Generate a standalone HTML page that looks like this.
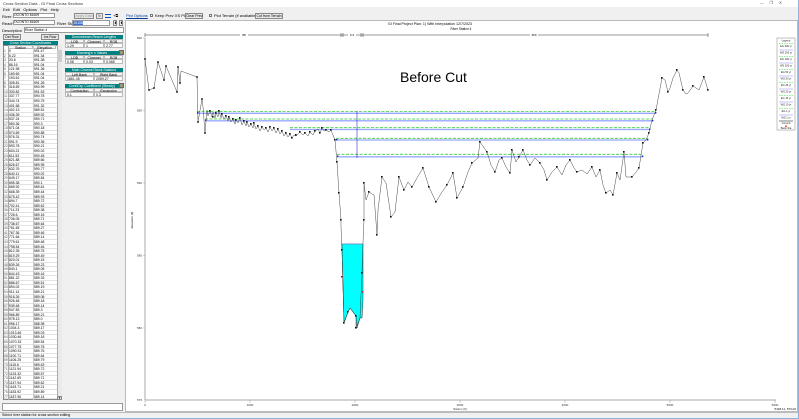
<!DOCTYPE html>
<html><head><meta charset="utf-8"><style>
*{margin:0;padding:0;box-sizing:border-box}
body{width:799px;height:419px;overflow:hidden;background:#f0f0f0;font-family:"Liberation Sans",sans-serif;font-size:4px;color:#000;position:relative}
.a{position:absolute}
.t{white-space:nowrap;line-height:1}
.box{position:absolute;background:#fff;border:1px solid #9a9a9a}
.btn{position:absolute;background:#e8e8e8;border:1px solid #8a8a8a;font-size:3.5px;text-align:center;line-height:5px;white-space:nowrap}
.teal{position:absolute;background:#008080;color:#fff;font-size:3.5px;text-align:center;line-height:4px;white-space:nowrap}
.cell{position:absolute;background:#fff;border:1px solid #bbb;font-size:3.5px;line-height:4px;white-space:nowrap;padding-left:1px}
.hd{position:absolute;background:#f4f4f4;border:1px solid #bbb;font-size:3.5px;line-height:4px;text-align:center}
#tbl div{height:4.55px;font-size:3.4px;line-height:4.5px;white-space:nowrap;position:relative;border-bottom:1px solid #e2e2e2}
#tbl span{position:absolute;top:0}
</style></head><body>
<div class="a" style="left:0;top:0;width:799px;height:7px;background:#fff"></div>
<div class="a t" style="left:3px;top:1.5px;font-size:4px;color:#333">Cross Section Data - GI Final Cross Sections</div>
<div class="a t" style="left:760px;top:1px;font-size:4px;color:#555">—&nbsp;&nbsp;&nbsp;&nbsp;&nbsp;❐&nbsp;&nbsp;&nbsp;&nbsp;&nbsp;✕</div>
<div class="a t" style="left:3px;top:8px;font-size:4px">Exit&nbsp;&nbsp;&nbsp;Edit&nbsp;&nbsp;&nbsp;Options&nbsp;&nbsp;&nbsp;Plot&nbsp;&nbsp;&nbsp;Help</div>
<div class="a t" style="left:2px;top:14.5px">River:</div>
<div class="box" style="left:13px;top:13px;width:42px;height:5px"></div><div class="a t" style="left:14px;top:14px;font-size:3.4px">OCONTO 81609</div>
<div class="a t" style="left:2px;top:21.5px">Reach:</div>
<div class="box" style="left:13px;top:20px;width:42px;height:5px"></div><div class="a t" style="left:14px;top:21px;font-size:3.4px">OCONTO 81609</div>
<div class="btn" style="left:74px;top:13px;width:20px;height:6px;color:#999">Apply Data</div>
<div class="btn" style="left:96px;top:13px;width:7px;height:6px">↻</div>
<div class="a" style="left:105px;top:14px;width:6px;height:4px;border-top:1px solid #0050c8;border-bottom:1px solid #0050c8"></div>
<div class="a t" style="left:113px;top:13.5px;font-size:4px">+⧉</div>
<div class="a t" style="left:57px;top:21.5px">River Sta.:</div>
<div class="box" style="left:72px;top:20px;width:38px;height:6px"></div>
<div class="a" style="left:73px;top:21px;width:10px;height:4px;background:#3a6ed6"></div><div class="a t" style="left:73.5px;top:21.5px;font-size:3.4px;color:#fff">26108</div>
<div class="btn" style="left:113px;top:20px;width:4px;height:6px">⬍</div>
<div class="btn" style="left:119px;top:20px;width:4px;height:6px">⬆</div>
<div class="a t" style="left:2px;top:29px">Description</div>
<div class="box" style="left:24px;top:27px;width:100px;height:6px"></div><div class="a t" style="left:25px;top:28.5px;font-size:3.4px">River Station 4</div>
<div class="a t" style="left:126px;top:14px;color:#003c96;text-decoration:underline">Plot Options</div>
<div class="a" style="left:150px;top:14px;width:3px;height:3px;border:1px solid #777;background:#fff"></div>
<div class="a t" style="left:155px;top:14px">Keep Prev XS Plots</div>
<div class="btn" style="left:185px;top:13px;width:18px;height:6px">Clear Prev</div>
<div class="a" style="left:209px;top:14px;width:3px;height:3px;border:1px solid #777;background:#fff"></div>
<div class="a t" style="left:214px;top:14px">Plot Terrain (if available)</div>
<div class="btn" style="left:255px;top:13px;width:28px;height:6px">Cut from Terrain</div>
<div class="btn" style="left:3px;top:34px;width:18px;height:6px">Del Row</div>
<div class="btn" style="left:41px;top:34px;width:18px;height:6px">Ins Row</div>
<div class="teal" style="left:3px;top:41px;width:55px;height:4px">Cross Section Coordinates</div>
<div class="a" style="left:3px;top:45px;width:59px;height:355px;background:#fff;border:1px solid #888"></div>
<div class="hd" style="left:8px;top:45px;width:25px;height:4px">Station</div>
<div class="hd" style="left:33px;top:45px;width:23px;height:4px">Elevation</div>
<div class="a" style="left:57px;top:45px;width:5px;height:355px;background:#eaeaea;border-left:1px solid #aaa"></div>
<div class="a" style="left:57px;top:50px;width:5px;height:12px;background:#cdcdcd"></div>
<div id="tbl" class="a" style="left:4px;top:49px;width:53px;height:350px;overflow:hidden">
<div><span style="left:0;color:#555">1</span><span style="left:5px">0</span><span style="left:30px">591.47</span></div>
<div><span style="left:0;color:#555">2</span><span style="left:5px">5.22</span><span style="left:30px">591.34</span></div>
<div><span style="left:0;color:#555">3</span><span style="left:5px">33.6</span><span style="left:30px">591.38</span></div>
<div><span style="left:0;color:#555">4</span><span style="left:5px">86.16</span><span style="left:30px">591.04</span></div>
<div><span style="left:0;color:#555">5</span><span style="left:5px">121.98</span><span style="left:30px">591.36</span></div>
<div><span style="left:0;color:#555">6</span><span style="left:5px">169.69</span><span style="left:30px">591.04</span></div>
<div><span style="left:0;color:#555">7</span><span style="left:5px">193.61</span><span style="left:30px">591.04</span></div>
<div><span style="left:0;color:#555">8</span><span style="left:5px">305.81</span><span style="left:30px">591.28</span></div>
<div><span style="left:0;color:#555">9</span><span style="left:5px">316.69</span><span style="left:30px">590.99</span></div>
<div><span style="left:0;color:#555">10</span><span style="left:5px">330.82</span><span style="left:30px">591.53</span></div>
<div><span style="left:0;color:#555">11</span><span style="left:5px">337.77</span><span style="left:30px">590.78</span></div>
<div><span style="left:0;color:#555">12</span><span style="left:5px">344.74</span><span style="left:30px">590.75</span></div>
<div><span style="left:0;color:#555">13</span><span style="left:5px">401.68</span><span style="left:30px">591.32</span></div>
<div><span style="left:0;color:#555">14</span><span style="left:5px">402.13</span><span style="left:30px">589.51</span></div>
<div><span style="left:0;color:#555">15</span><span style="left:5px">436.39</span><span style="left:30px">589.92</span></div>
<div><span style="left:0;color:#555">16</span><span style="left:5px">537.24</span><span style="left:30px">590.71</span></div>
<div><span style="left:0;color:#555">17</span><span style="left:5px">550.36</span><span style="left:30px">590.3</span></div>
<div><span style="left:0;color:#555">18</span><span style="left:5px">571.04</span><span style="left:30px">590.18</span></div>
<div><span style="left:0;color:#555">19</span><span style="left:5px">574.69</span><span style="left:30px">590.88</span></div>
<div><span style="left:0;color:#555">20</span><span style="left:5px">576.31</span><span style="left:30px">590.74</span></div>
<div><span style="left:0;color:#555">21</span><span style="left:5px">591.9</span><span style="left:30px">590.36</span></div>
<div><span style="left:0;color:#555">22</span><span style="left:5px">593.78</span><span style="left:30px">590.21</span></div>
<div><span style="left:0;color:#555">23</span><span style="left:5px">604.21</span><span style="left:30px">590.02</span></div>
<div><span style="left:0;color:#555">24</span><span style="left:5px">611.53</span><span style="left:30px">590.45</span></div>
<div><span style="left:0;color:#555">25</span><span style="left:5px">621.88</span><span style="left:30px">589.66</span></div>
<div><span style="left:0;color:#555">26</span><span style="left:5px">626.67</span><span style="left:30px">589.95</span></div>
<div><span style="left:0;color:#555">27</span><span style="left:5px">632.76</span><span style="left:30px">590.77</span></div>
<div><span style="left:0;color:#555">28</span><span style="left:5px">640.11</span><span style="left:30px">590.02</span></div>
<div><span style="left:0;color:#555">29</span><span style="left:5px">649.17</span><span style="left:30px">589.84</span></div>
<div><span style="left:0;color:#555">30</span><span style="left:5px">655.38</span><span style="left:30px">590.1</span></div>
<div><span style="left:0;color:#555">31</span><span style="left:5px">665.92</span><span style="left:30px">589.61</span></div>
<div><span style="left:0;color:#555">32</span><span style="left:5px">668.39</span><span style="left:30px">589.44</span></div>
<div><span style="left:0;color:#555">33</span><span style="left:5px">675.42</span><span style="left:30px">589.93</span></div>
<div><span style="left:0;color:#555">34</span><span style="left:5px">694.7</span><span style="left:30px">589.72</span></div>
<div><span style="left:0;color:#555">35</span><span style="left:5px">702.41</span><span style="left:30px">589.62</span></div>
<div><span style="left:0;color:#555">36</span><span style="left:5px">711.23</span><span style="left:30px">589.38</span></div>
<div><span style="left:0;color:#555">37</span><span style="left:5px">726.6</span><span style="left:30px">589.16</span></div>
<div><span style="left:0;color:#555">38</span><span style="left:5px">736.05</span><span style="left:30px">589.71</span></div>
<div><span style="left:0;color:#555">39</span><span style="left:5px">738.67</span><span style="left:30px">589.64</span></div>
<div><span style="left:0;color:#555">40</span><span style="left:5px">761.65</span><span style="left:30px">589.27</span></div>
<div><span style="left:0;color:#555">41</span><span style="left:5px">767.36</span><span style="left:30px">589.46</span></div>
<div><span style="left:0;color:#555">42</span><span style="left:5px">771.64</span><span style="left:30px">589.14</span></div>
<div><span style="left:0;color:#555">43</span><span style="left:5px">779.61</span><span style="left:30px">589.48</span></div>
<div><span style="left:0;color:#555">44</span><span style="left:5px">798.54</span><span style="left:30px">589.46</span></div>
<div><span style="left:0;color:#555">45</span><span style="left:5px">812.35</span><span style="left:30px">589.75</span></div>
<div><span style="left:0;color:#555">46</span><span style="left:5px">819.29</span><span style="left:30px">589.49</span></div>
<div><span style="left:0;color:#555">47</span><span style="left:5px">823.01</span><span style="left:30px">589.15</span></div>
<div><span style="left:0;color:#555">48</span><span style="left:5px">839.26</span><span style="left:30px">589.23</span></div>
<div><span style="left:0;color:#555">49</span><span style="left:5px">840.1</span><span style="left:30px">589.05</span></div>
<div><span style="left:0;color:#555">50</span><span style="left:5px">844.43</span><span style="left:30px">589.16</span></div>
<div><span style="left:0;color:#555">51</span><span style="left:5px">881.22</span><span style="left:30px">589.33</span></div>
<div><span style="left:0;color:#555">52</span><span style="left:5px">886.67</span><span style="left:30px">589.51</span></div>
<div><span style="left:0;color:#555">53</span><span style="left:5px">894.02</span><span style="left:30px">589.19</span></div>
<div><span style="left:0;color:#555">54</span><span style="left:5px">911.14</span><span style="left:30px">589.21</span></div>
<div><span style="left:0;color:#555">55</span><span style="left:5px">918.26</span><span style="left:30px">589.08</span></div>
<div><span style="left:0;color:#555">56</span><span style="left:5px">926.48</span><span style="left:30px">589.18</span></div>
<div><span style="left:0;color:#555">57</span><span style="left:5px">939.48</span><span style="left:30px">589.14</span></div>
<div><span style="left:0;color:#555">58</span><span style="left:5px">947.83</span><span style="left:30px">589.3</span></div>
<div><span style="left:0;color:#555">59</span><span style="left:5px">966.89</span><span style="left:30px">589.21</span></div>
<div><span style="left:0;color:#555">60</span><span style="left:5px">978.13</span><span style="left:30px">589.0</span></div>
<div><span style="left:0;color:#555">61</span><span style="left:5px">996.17</span><span style="left:30px">588.98</span></div>
<div><span style="left:0;color:#555">62</span><span style="left:5px">1004.3</span><span style="left:30px">589.17</span></div>
<div><span style="left:0;color:#555">63</span><span style="left:5px">1013.46</span><span style="left:30px">589.03</span></div>
<div><span style="left:0;color:#555">64</span><span style="left:5px">1030.46</span><span style="left:30px">589.18</span></div>
<div><span style="left:0;color:#555">65</span><span style="left:5px">1070.33</span><span style="left:30px">589.54</span></div>
<div><span style="left:0;color:#555">66</span><span style="left:5px">1077.75</span><span style="left:30px">589.78</span></div>
<div><span style="left:0;color:#555">67</span><span style="left:5px">1090.31</span><span style="left:30px">589.76</span></div>
<div><span style="left:0;color:#555">68</span><span style="left:5px">1100.71</span><span style="left:30px">589.64</span></div>
<div><span style="left:0;color:#555">69</span><span style="left:5px">1106.25</span><span style="left:30px">589.79</span></div>
<div><span style="left:0;color:#555">70</span><span style="left:5px">1115.6</span><span style="left:30px">589.63</span></div>
<div><span style="left:0;color:#555">71</span><span style="left:5px">1121.94</span><span style="left:30px">589.72</span></div>
<div><span style="left:0;color:#555">72</span><span style="left:5px">1133.32</span><span style="left:30px">589.57</span></div>
<div><span style="left:0;color:#555">73</span><span style="left:5px">1142.69</span><span style="left:30px">589.71</span></div>
<div><span style="left:0;color:#555">74</span><span style="left:5px">1147.94</span><span style="left:30px">589.62</span></div>
<div><span style="left:0;color:#555">75</span><span style="left:5px">1163.71</span><span style="left:30px">589.21</span></div>
<div><span style="left:0;color:#555">76</span><span style="left:5px">1183.92</span><span style="left:30px">589.89</span></div>
<div><span style="left:0;color:#555">77</span><span style="left:5px">1187.96</span><span style="left:30px">589.14</span></div>
</div>
<div class="a" style="left:8px;top:45px;width:1px;height:355px;background:#aaa"></div>
<div class="a" style="left:33px;top:45px;width:1px;height:355px;background:#ccc"></div>
<div class="btn" style="left:57px;top:396px;width:5px;height:4px;line-height:3px">▾</div>
<div class="box" style="left:2px;top:403px;width:121px;height:8px"></div>
<div class="teal" style="left:65px;top:35px;width:58px;height:4px">Downstream Reach Lengths</div>
<div class="hd" style="left:65px;top:39px;width:19px;height:4px">LOB</div><div class="hd" style="left:84px;top:39px;width:20px;height:4px">Channel</div><div class="hd" style="left:104px;top:39px;width:19px;height:4px">ROB</div>
<div class="cell" style="left:65px;top:43px;width:19px;height:5px">1.29</div><div class="cell" style="left:84px;top:43px;width:20px;height:5px">1</div><div class="cell" style="left:104px;top:43px;width:19px;height:5px">2.77</div>
<div class="teal" style="left:65px;top:51px;width:54px;height:4px">Manning's n Values</div>
<div class="a" style="left:119px;top:50px;width:5px;height:5px;background:#9a9a70;border:1px solid #666"></div>
<div class="hd" style="left:65px;top:55px;width:19px;height:4px">LOB</div><div class="hd" style="left:84px;top:55px;width:20px;height:4px">Channel</div><div class="hd" style="left:104px;top:55px;width:19px;height:4px">ROB</div>
<div class="cell" style="left:65px;top:59px;width:19px;height:5px">0.06</div><div class="cell" style="left:84px;top:59px;width:20px;height:5px">0.03</div><div class="cell" style="left:104px;top:59px;width:19px;height:5px">0.065</div>
<div class="teal" style="left:65px;top:68px;width:58px;height:4px">Main Channel Bank Stations</div>
<div class="hd" style="left:65px;top:72px;width:29px;height:4px">Left Bank</div><div class="hd" style="left:94px;top:72px;width:29px;height:4px">Right Bank</div>
<div class="cell" style="left:65px;top:76px;width:29px;height:5px">1861.45</div><div class="cell" style="left:94px;top:76px;width:29px;height:5px">2059.27</div>
<div class="teal" style="left:65px;top:84px;width:54px;height:4px">Cont\Exp Coefficient (Steady)</div>
<div class="a" style="left:119px;top:83px;width:5px;height:5px;background:#9a9a70;border:1px solid #666"></div>
<div class="hd" style="left:65px;top:88px;width:29px;height:4px">Contraction</div><div class="hd" style="left:94px;top:88px;width:29px;height:4px">Expansion</div>
<div class="cell" style="left:65px;top:92px;width:29px;height:5px">0.1</div><div class="cell" style="left:94px;top:92px;width:29px;height:5px">0.3</div>
<div class="a" style="left:125px;top:20px;width:673px;height:392px;background:#fff;border:1px solid #bbb"></div>
<div class="a" style="left:0;top:412px;width:799px;height:1px;background:#bbb"></div>
<div class="a t" style="left:2px;top:414px;font-size:3.6px">Select river station for cross section editing</div>
<div class="a" style="left:0;top:418px;width:799px;height:1px;background:#8fb4dc"></div>
<div class="a" style="left:798px;top:0;width:1px;height:419px;background:#8fb4dc"></div>
<svg class="a" style="left:0;top:0" width="799" height="419" viewBox="0 0 799 419" font-family="Liberation Sans, sans-serif">
<text x="430" y="25" font-size="3.6" text-anchor="middle">GI Final Project        Plan:    1) With Interpolation    12/7/2023</text>
<text x="461" y="30" font-size="3.2" text-anchor="middle">River Station 4</text>
<g stroke="#000" stroke-width="0.4">
<line x1="145" y1="35" x2="708" y2="35"/>
<line x1="145" y1="33" x2="145" y2="37"/><line x1="341" y1="33" x2="341" y2="37"/><line x1="343" y1="33" x2="343" y2="37"/><line x1="361" y1="33" x2="361" y2="37"/><line x1="363" y1="33" x2="363" y2="37"/><line x1="708" y1="33" x2="708" y2="37"/>
</g>
<rect x="240" y="33" width="8" height="4" fill="#fff"/><text x="244" y="36" font-size="3" text-anchor="middle">88</text>
<rect x="348" y="33" width="8" height="4" fill="#fff"/><text x="352" y="36" font-size="3" text-anchor="middle">0.3</text>
<rect x="530" y="33" width="8" height="4" fill="#fff"/><text x="534" y="36" font-size="3" text-anchor="middle">350</text>
<g stroke="#555" stroke-width="0.5" fill="none">
<line x1="145" y1="38" x2="145" y2="400"/>
<line x1="145" y1="400" x2="776" y2="400"/>
</g>
<g stroke="#888" stroke-width="0.4">
<line x1="143" y1="38" x2="145" y2="38"/><line x1="143" y1="110.5" x2="145" y2="110.5"/><line x1="143" y1="183" x2="145" y2="183"/><line x1="143" y1="255.5" x2="145" y2="255.5"/><line x1="143" y1="328" x2="145" y2="328"/>
<line x1="145" y1="400" x2="145" y2="403"/><line x1="250" y1="400" x2="250" y2="403"/><line x1="355" y1="400" x2="355" y2="403"/><line x1="460" y1="400" x2="460" y2="403"/><line x1="565" y1="400" x2="565" y2="403"/><line x1="670" y1="400" x2="670" y2="403"/><line x1="775" y1="400" x2="775" y2="403"/>
</g>
<g font-size="3" text-anchor="end" fill="#333">
<text x="142" y="39">600</text><text x="142" y="111.5">595</text><text x="142" y="184">590</text><text x="142" y="256.5">585</text><text x="142" y="329">580</text><text x="142" y="401">575</text>
</g>
<g font-size="3" text-anchor="middle" fill="#333">
<text x="145" y="406">0</text><text x="250" y="406">1000</text><text x="355" y="406">2000</text><text x="460" y="406">3000</text><text x="565" y="406">4000</text><text x="670" y="406">5000</text><text x="775" y="406">6000</text>
<text x="460" y="410">Station (ft)</text>
</g>
<text x="796" y="410" font-size="3" text-anchor="end">5418.11, 573.02</text>
<text x="133" y="220" font-size="3" transform="rotate(-90 133 220)" text-anchor="middle">Elevation (ft)</text>
<text x="400" y="82" font-size="14" fill="#000">Before Cut</text>
<polygon points="342,244 363,244 363,300 362,318 360,318 357,328 356,316 350,308 348,312 344,323 342,250" fill="#00ffff" stroke="#000" stroke-width="0.4"/>
<line x1="341" y1="244" x2="363" y2="244" stroke="#7a9ae0" stroke-width="0.8"/>
<g fill="none">
<line x1="197" y1="111.5" x2="656" y2="111.5" stroke="#3c3" stroke-width="0.8" stroke-dasharray="3,1.5"/>
<line x1="197" y1="113.3" x2="656" y2="113.3" stroke="#99a8ff" stroke-width="1.3"/>
<line x1="205" y1="119" x2="653" y2="119" stroke="#3c3" stroke-width="0.8" stroke-dasharray="3,1.5"/>
<line x1="205" y1="120.8" x2="653" y2="120.8" stroke="#99a8ff" stroke-width="1.3"/>
<line x1="290" y1="127.7" x2="650" y2="127.7" stroke="#3c3" stroke-width="0.8" stroke-dasharray="3,1.5"/>
<line x1="290" y1="129.5" x2="650" y2="129.5" stroke="#99a8ff" stroke-width="1.3"/>
<line x1="336" y1="138.3" x2="648" y2="138.3" stroke="#3c3" stroke-width="0.8" stroke-dasharray="3,1.5"/>
<line x1="336" y1="140" x2="648" y2="140" stroke="#99a8ff" stroke-width="1.3"/>
<line x1="337" y1="154.3" x2="643" y2="154.3" stroke="#3c3" stroke-width="0.8" stroke-dasharray="3,1.5"/>
<line x1="337" y1="156.8" x2="643" y2="156.8" stroke="#99a8ff" stroke-width="1.3"/>
</g>
<g stroke="#00c" stroke-width="0.5"><line x1="357" y1="111" x2="357" y2="158"/></g>
<polyline fill="none" stroke="#333" stroke-width="0.45" points="145,59 149,90 154,88 158,62 164,80 166,66 177,92 178,67 180,83 181,71 197,77 198,122 202,99 203,107 205,133 207,110 208,116 210,111 212,117 213,112 215,118 216,113 218,117 219,111 221,118 222,114 224,119 226,116 228,121 229,117 231,122 233,119 235,124 236,120 238,123 240,118 242,125 244,121 246,126 247,122 249,127 251,124 253,128 254,123 256,129 258,126 260,131 262,127 264,130 266,128 268,132 270,127 272,131 274,128 276,133 278,129 280,134 282,131 284,136 286,133 288,137 290,134 292,138 294,135 296,136 300,132 303,135 305,133 308,136 310,132 313,135 315,131 318,129 320,133 322,128 324,131 326,130 329,132 331,130 335,140 337,162 339,193 341,220 341,227 342,250 344,323 348,312 350,308 356,316 356,328 360,318 362,273 363,242 364,220 364,183 366,200 369,192 374,195 377,235 378,210 382,177 386,183 391,217 395,212 399,177 404,190 408,182 412,187 417,178 423,168 429,187 436,202 442,192 447,185 453,173 457,198 463,187 468,172 472,163 478,158 480,142 487,152 491,165 495,172 499,160 502,158 506,167 510,173 512,150 516,162 519,157 523,150 527,160 530,165 535,158 540,163 544,170 547,180 552,172 557,167 562,175 566,165 570,160 574,168 577,172 582,170 587,174 592,167 596,177 600,170 603,185 606,193 610,190 613,195 617,173 620,180 624,152 626,177 632,177 636,172 639,168 643,143 646,140 649,133 652,120 656,110 662,78 665,80 668,92 670,88 673,78 677,70 679,73 683,90 686,94 688,93 693,86 699,90 704,77 708,90"/>
<g fill="#111">
<rect x="144.2" y="58.2" width="1.6" height="1.6"/><rect x="148.2" y="89.2" width="1.6" height="1.6"/><rect x="153.2" y="87.2" width="1.6" height="1.6"/><rect x="157.2" y="61.2" width="1.6" height="1.6"/><rect x="163.2" y="79.2" width="1.6" height="1.6"/><rect x="165.2" y="65.2" width="1.6" height="1.6"/><rect x="176.2" y="91.2" width="1.6" height="1.6"/><rect x="177.2" y="66.2" width="1.6" height="1.6"/><rect x="179.2" y="82.2" width="1.6" height="1.6"/><rect x="196.2" y="76.2" width="1.6" height="1.6"/><rect x="197.2" y="121.2" width="1.6" height="1.6"/><rect x="201.2" y="98.2" width="1.6" height="1.6"/><rect x="204.2" y="132.2" width="1.6" height="1.6"/>
<rect x="209" y="110" width="1.6" height="1.6"/><rect x="212" y="116" width="1.6" height="1.6"/><rect x="215" y="112" width="1.6" height="1.6"/><rect x="218" y="110" width="1.6" height="1.6"/><rect x="221" y="113" width="1.6" height="1.6"/><rect x="225" y="115" width="1.6" height="1.6"/><rect x="228" y="116" width="1.6" height="1.6"/><rect x="232" y="118" width="1.6" height="1.6"/><rect x="235" y="119" width="1.6" height="1.6"/><rect x="239" y="117" width="1.6" height="1.6"/><rect x="243" y="120" width="1.6" height="1.6"/><rect x="246" y="121" width="1.6" height="1.6"/><rect x="250" y="123" width="1.6" height="1.6"/><rect x="253" y="122" width="1.6" height="1.6"/><rect x="257" y="125" width="1.6" height="1.6"/><rect x="261" y="126" width="1.6" height="1.6"/><rect x="265" y="127" width="1.6" height="1.6"/><rect x="269" y="126" width="1.6" height="1.6"/><rect x="273" y="127" width="1.6" height="1.6"/><rect x="277" y="128" width="1.6" height="1.6"/><rect x="281" y="130" width="1.6" height="1.6"/><rect x="285" y="132" width="1.6" height="1.6"/><rect x="289" y="133" width="1.6" height="1.6"/><rect x="291" y="137" width="1.6" height="1.6"/><rect x="295" y="134" width="1.6" height="1.6"/><rect x="299" y="131" width="1.6" height="1.6"/><rect x="304" y="132" width="1.6" height="1.6"/><rect x="309" y="131" width="1.6" height="1.6"/><rect x="314" y="130" width="1.6" height="1.6"/><rect x="319" y="132" width="1.6" height="1.6"/><rect x="321" y="127" width="1.6" height="1.6"/><rect x="325" y="129" width="1.6" height="1.6"/><rect x="330" y="129" width="1.6" height="1.6"/><rect x="334" y="139" width="1.6" height="1.6"/><rect x="336" y="161" width="1.6" height="1.6"/><rect x="338" y="192" width="1.6" height="1.6"/><rect x="340" y="219" width="1.6" height="1.6"/><rect x="341" y="249" width="1.6" height="1.6"/><rect x="343" y="322" width="1.6" height="1.6"/><rect x="347" y="311" width="1.6" height="1.6"/><rect x="355" y="315" width="1.6" height="1.6"/><rect x="355" y="327" width="1.6" height="1.6"/><rect x="361" y="272" width="1.6" height="1.6"/><rect x="363" y="219" width="1.6" height="1.6"/><rect x="363" y="182" width="1.6" height="1.6"/><rect x="368" y="191" width="1.6" height="1.6"/><rect x="376" y="234" width="1.6" height="1.6"/><rect x="381" y="176" width="1.6" height="1.6"/><rect x="390" y="216" width="1.6" height="1.6"/><rect x="398" y="176" width="1.6" height="1.6"/><rect x="403" y="189" width="1.6" height="1.6"/><rect x="411" y="186" width="1.6" height="1.6"/><rect x="422" y="167" width="1.6" height="1.6"/><rect x="428" y="186" width="1.6" height="1.6"/><rect x="435" y="201" width="1.6" height="1.6"/><rect x="446" y="184" width="1.6" height="1.6"/><rect x="452" y="172" width="1.6" height="1.6"/><rect x="456" y="197" width="1.6" height="1.6"/><rect x="462" y="186" width="1.6" height="1.6"/><rect x="471" y="162" width="1.6" height="1.6"/><rect x="479" y="141" width="1.6" height="1.6"/><rect x="486" y="151" width="1.6" height="1.6"/><rect x="494" y="171" width="1.6" height="1.6"/><rect x="501" y="157" width="1.6" height="1.6"/><rect x="509" y="172" width="1.6" height="1.6"/><rect x="511" y="149" width="1.6" height="1.6"/><rect x="518" y="156" width="1.6" height="1.6"/><rect x="522" y="149" width="1.6" height="1.6"/><rect x="529" y="164" width="1.6" height="1.6"/><rect x="539" y="162" width="1.6" height="1.6"/><rect x="546" y="179" width="1.6" height="1.6"/><rect x="556" y="166" width="1.6" height="1.6"/><rect x="569" y="159" width="1.6" height="1.6"/><rect x="576" y="171" width="1.6" height="1.6"/><rect x="591" y="166" width="1.6" height="1.6"/><rect x="599" y="169" width="1.6" height="1.6"/><rect x="605" y="192" width="1.6" height="1.6"/><rect x="612" y="194" width="1.6" height="1.6"/><rect x="616" y="172" width="1.6" height="1.6"/><rect x="623" y="151" width="1.6" height="1.6"/><rect x="631" y="176" width="1.6" height="1.6"/><rect x="638" y="167" width="1.6" height="1.6"/><rect x="642" y="142" width="1.6" height="1.6"/><rect x="648" y="132" width="1.6" height="1.6"/><rect x="655" y="109" width="1.6" height="1.6"/><rect x="661" y="77" width="1.6" height="1.6"/><rect x="667" y="91" width="1.6" height="1.6"/><rect x="676" y="69" width="1.6" height="1.6"/><rect x="682" y="89" width="1.6" height="1.6"/><rect x="692" y="85" width="1.6" height="1.6"/><rect x="703" y="76" width="1.6" height="1.6"/><rect x="707" y="89" width="1.6" height="1.6"/>
</g>
<g fill="#22c"><rect x="197" y="112" width="1.4" height="1.4"/><rect x="205" y="119.5" width="1.4" height="1.4"/><rect x="336" y="139" width="1.4" height="1.4"/><rect x="337" y="155.5" width="1.4" height="1.4"/><rect x="655" y="112" width="1.4" height="1.4"/><rect x="652" y="120" width="1.4" height="1.4"/><rect x="649" y="128.5" width="1.4" height="1.4"/><rect x="647" y="139" width="1.4" height="1.4"/><rect x="642" y="155.5" width="1.4" height="1.4"/></g>
<rect x="341" y="276" width="1.5" height="1.5" fill="#e00"/><rect x="362" y="291" width="1.5" height="1.5" fill="#e00"/>
<rect x="777" y="38" width="18" height="92" fill="#fff" stroke="#666" stroke-width="0.4"/>
<g font-size="2.6" text-anchor="middle" fill="#222">
<text x="786" y="41.5">Legend</text>
<text x="786" y="47">EG 200 yr</text><text x="786" y="53.5">WS 200 yr</text><text x="786" y="60">EG 100 yr</text><text x="786" y="66.5">WS 100 yr</text><text x="786" y="73">EG 50 yr</text><text x="786" y="79.5">WS 50 yr</text><text x="786" y="86">EG 25 yr</text><text x="786" y="92.5">WS 25 yr</text><text x="786" y="99">EG 10 yr</text><text x="786" y="105.5">WS 10 yr</text><text x="786" y="112">EG 1 yr</text><text x="786" y="118.5">WS 1 yr</text><text x="786" y="124">Ground</text><text x="786" y="129">Bank Sta</text>
</g>
<g stroke-width="0.5">
<line x1="779" y1="43.5" x2="793" y2="43.5" stroke="#3c3" stroke-dasharray="1.5,1"/><line x1="779" y1="50" x2="793" y2="50" stroke="#88f"/>
<line x1="779" y1="56.5" x2="793" y2="56.5" stroke="#3c3" stroke-dasharray="1.5,1"/><line x1="779" y1="63" x2="793" y2="63" stroke="#88f"/>
<line x1="779" y1="69.5" x2="793" y2="69.5" stroke="#3c3" stroke-dasharray="1.5,1"/><line x1="779" y1="76" x2="793" y2="76" stroke="#88f"/>
<line x1="779" y1="82.5" x2="793" y2="82.5" stroke="#3c3" stroke-dasharray="1.5,1"/><line x1="779" y1="89" x2="793" y2="89" stroke="#88f"/>
<line x1="779" y1="95.5" x2="793" y2="95.5" stroke="#3c3" stroke-dasharray="1.5,1"/><line x1="779" y1="102" x2="793" y2="102" stroke="#88f"/>
<line x1="779" y1="108.5" x2="793" y2="108.5" stroke="#3c3" stroke-dasharray="1.5,1"/><line x1="779" y1="115" x2="793" y2="115" stroke="#88f"/>
<line x1="779" y1="121" x2="793" y2="121" stroke="#000"/>
</g>
<rect x="785.3" y="125.5" width="1.4" height="1.4" fill="#e00"/>
</svg>
</body></html>
